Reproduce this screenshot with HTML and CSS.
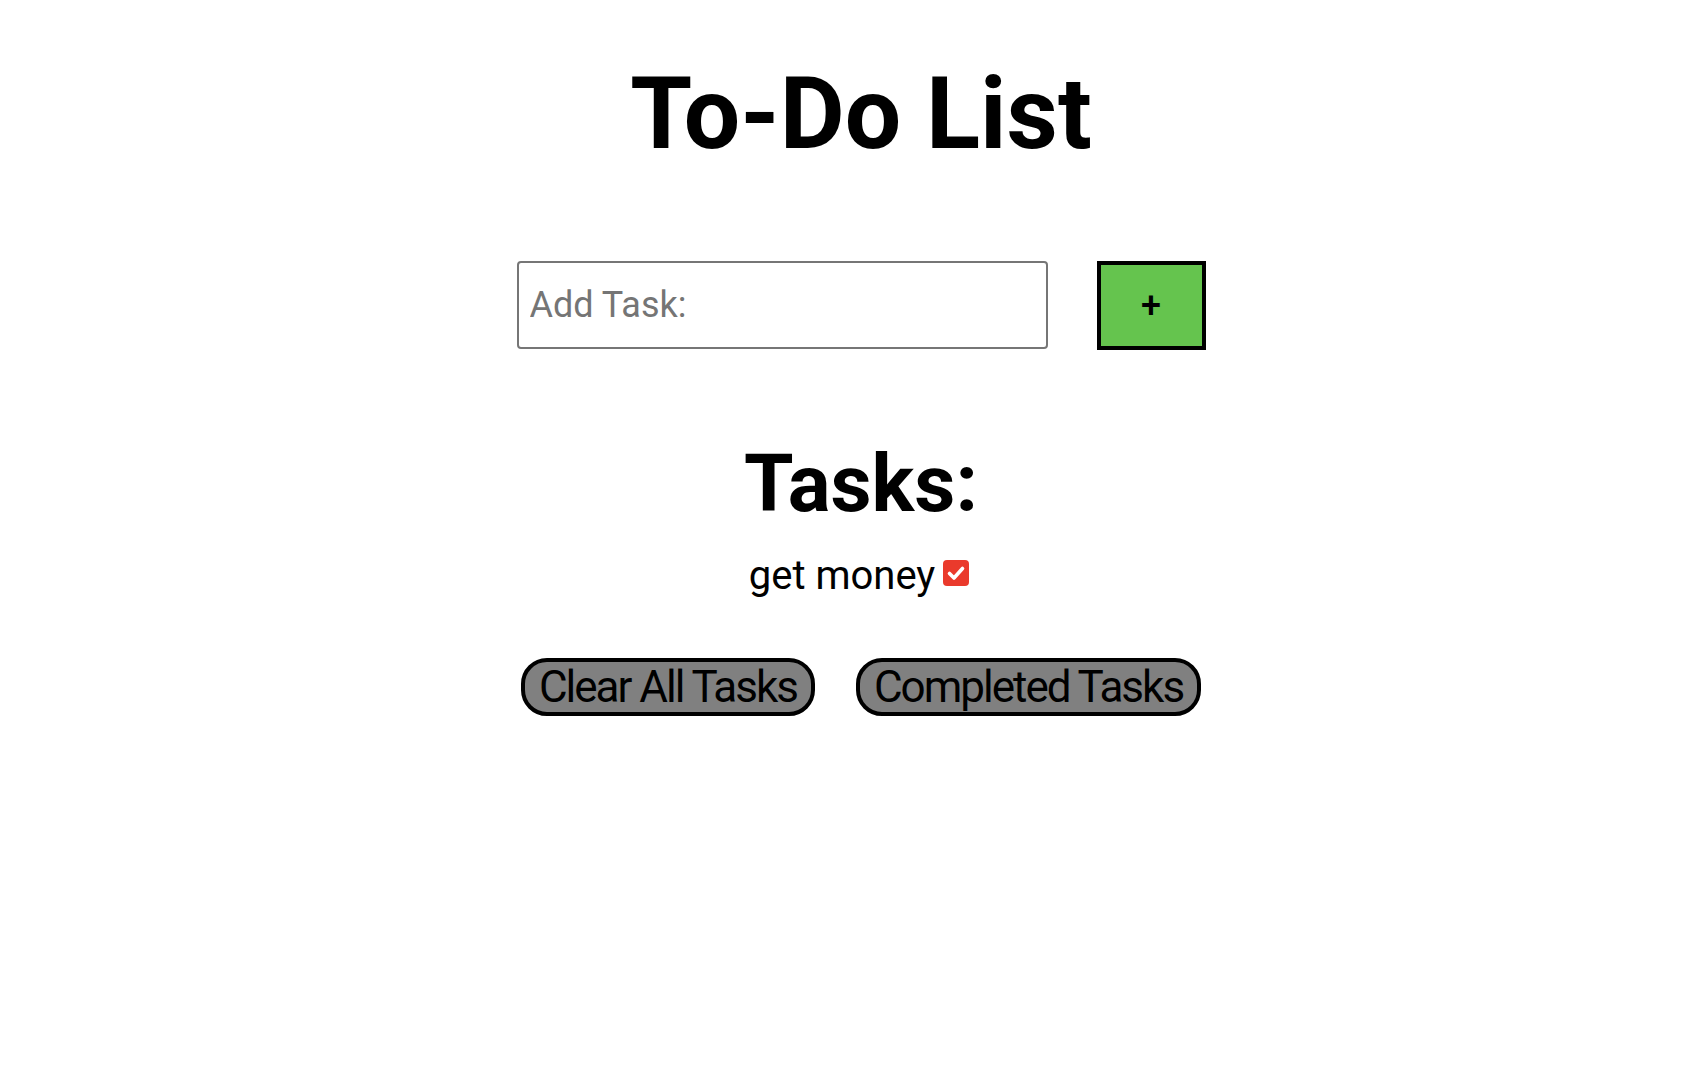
FILE: index.html
```html
<!DOCTYPE html>
<html lang="en">
<head>
<meta charset="utf-8">
<title>To-Do List</title>
<link rel="stylesheet" href="styles.css">
</head>
<body>
<main class="page">
  <h1 class="title">To-Do List</h1>
  <form class="add-row" onsubmit="return false">
    <input class="task-input" type="text" placeholder="Add Task:">
    <button class="add-btn" type="button">+</button>
  </form>
  <h2 class="tasks-heading">Tasks:</h2>
  <ul class="task-list">
    <li class="task-item">
      <span class="task-text">get money</span>
      <span class="check" aria-label="done">
        <svg viewBox="0 0 26 26" width="26" height="26" aria-hidden="true">
          <rect x="0" y="0" width="26" height="26" rx="4" fill="#ea3a2c"/>
          <path d="M6.5 13.5 L11 18 L19.5 8.5" fill="none" stroke="#fff" stroke-width="3.6" stroke-linecap="round" stroke-linejoin="round"/>
        </svg>
      </span>
    </li>
  </ul>
  <div class="actions">
    <button class="pill-btn clear-btn" type="button">Clear All Tasks</button>
    <button class="pill-btn done-btn" type="button">Completed Tasks</button>
  </div>
</main>
</body>
</html>
```
FILE: styles.css
```css
html, body {
  margin: 0;
  padding: 0;
  background: #fff;
}
body {
  font-family: Roboto, "Liberation Sans", Arial, sans-serif;
  color: #000;
}
.page {
  display: flex;
  flex-direction: column;
  align-items: center;
  padding-left: 39px;
}
.title {
  margin: 54px 0 0 0;
  font-size: 100px;
  line-height: 120px;
  font-weight: 700;
}
.add-row {
  display: flex;
  gap: 49px;
  margin: 87px 0 0 0;
}
.task-input {
  box-sizing: border-box;
  width: 531px;
  height: 88px;
  border: 2px solid #767676;
  border-radius: 4px;
  padding: 0 11px;
  font-family: Roboto, "Liberation Sans", Arial, sans-serif;
  font-size: 36px;
  color: #000;
  background: #fff;
  outline: none;
}
.task-input::placeholder {
  color: #757575;
}
.add-btn {
  box-sizing: border-box;
  width: 109px;
  height: 89px;
  border: 4px solid #000;
  border-radius: 0;
  background: #65c44e;
  font-family: Roboto, "Liberation Sans", Arial, sans-serif;
  font-size: 36px;
  font-weight: 500;
  color: #000;
  padding: 0;
}
.tasks-heading {
  margin: 86px 0 0 0;
  font-size: 80px;
  line-height: 96px;
  font-weight: 700;
}
.task-list {
  list-style: none;
  margin: 21px 4px 0 0;
  padding: 0;
}
.task-item {
  display: flex;
  align-items: center;
  gap: 8px;
  font-size: 40px;
  line-height: 45px;
}
.check {
  display: flex;
  width: 26px;
  height: 26px;
  margin-top: -5px;
}
.actions {
  display: flex;
  gap: 41px;
  margin-top: 60px;
}
.pill-btn {
  box-sizing: border-box;
  height: 58px;
  border: 4px solid #000;
  border-radius: 26px;
  background: #808080;
  color: #000;
  font-family: Roboto, "Liberation Sans", Arial, sans-serif;
  font-size: 44px;
  line-height: 50px;
  letter-spacing: -2px;
  padding: 0 14px;
}
```
